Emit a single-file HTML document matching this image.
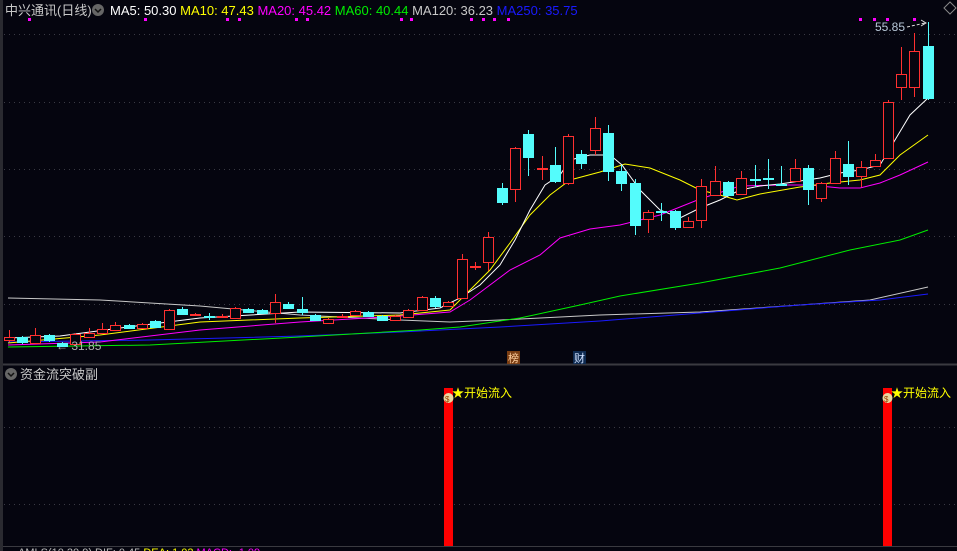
<!DOCTYPE html>
<html><head><meta charset="utf-8"><style>
html,body{margin:0;padding:0;background:#05050f;width:957px;height:551px;overflow:hidden}
svg{display:block}
text{font-family:"Liberation Sans","Noto Sans CJK SC",sans-serif}
</style></head><body>
<svg id="s" width="957" height="551" viewBox="0 0 957 551" xmlns="http://www.w3.org/2000/svg">
<rect width="957" height="551" fill="#05050f"/>
<rect x="0" y="0" width="3" height="551" fill="#2a2a30"/>
<g stroke="#3a3a44" stroke-width="1" stroke-dasharray="1,4">
<line x1="4" y1="34.5" x2="957" y2="34.5"/>
<line x1="4" y1="102.5" x2="957" y2="102.5"/>
<line x1="4" y1="169.5" x2="957" y2="169.5"/>
<line x1="4" y1="236.5" x2="957" y2="236.5"/>
<line x1="4" y1="304.5" x2="957" y2="304.5"/>
<line x1="4" y1="427.5" x2="957" y2="427.5"/>
<line x1="4" y1="504.5" x2="957" y2="504.5"/>
</g>
<line x1="3" y1="364.5" x2="957" y2="364.5" stroke="#3a3a40" stroke-width="2"/>
<line x1="3" y1="546.5" x2="957" y2="546.5" stroke="#3a3a40" stroke-width="1"/>
<text x="5" y="15" font-size="13" fill="#c8c8c8">中兴通讯(日线)</text>
<circle cx="98" cy="10" r="6" fill="#666"/><path d="M95 9 L98 12 L101 9" stroke="#111" stroke-width="1.5" fill="none"/>
<text x="110" y="15" font-size="13"><tspan fill="#ffffff">MA5: 50.30 </tspan><tspan fill="#ffff00">MA10: 47.43 </tspan><tspan fill="#ff00ff">MA20: 45.42 </tspan><tspan fill="#00ee00">MA60: 40.44 </tspan><tspan fill="#c8c8c8">MA120: 36.23 </tspan><tspan fill="#1a1aff">MA250: 35.75</tspan></text>
<path d="M944 8 L950 2 L956 8 L950 14 Z" stroke="#888" fill="none"/>
<g id="dots" fill="#ff00ff"></g>
<g id="ma" fill="none" stroke-width="1"></g>
<g id="cd"></g>
<text x="875" y="31" font-size="12" fill="#b8c8d8">55.85</text>
<path d="M907 27 L925 23" stroke="#ddd" stroke-dasharray="3,2"/><path d="M921 20 L926 23 L921 26" stroke="#ddd" fill="none"/>
<text x="56" y="350" font-size="12" fill="#b0b0b0">← 31.85</text>
<rect x="507" y="351" width="13" height="13" fill="#7a3d12"/><text x="508" y="362" font-size="11" fill="#ffd0a0">榜</text>
<rect x="573" y="351" width="13" height="13" fill="#0e2a50"/><text x="574" y="362" font-size="11" fill="#cfe0ff">财</text>
<circle cx="11" cy="374" r="6" fill="#666"/><path d="M8 373 L11 376 L14 373" stroke="#111" stroke-width="1.5" fill="none"/>
<text x="20" y="379" font-size="13" fill="#c8c8c8">资金流突破副</text>
<rect x="444" y="388" width="9" height="158" fill="#ff0000"/>
<rect x="883" y="388" width="9" height="158" fill="#ff0000"/>
<g font-size="12" fill="#ffff00"><text x="452" y="397">★开始流入</text><text x="891" y="397">★开始流入</text></g>
<g><circle cx="448.5" cy="398" r="5" fill="#e8d8a0"/><text x="445" y="402" font-size="8" fill="#a04000">$</text>
<circle cx="887.5" cy="398" r="5" fill="#e8d8a0"/><text x="884" y="402" font-size="8" fill="#a04000">$</text></g>
<text x="18" y="556" font-size="11"><tspan fill="#bbb">AMLS(10,20,9) DIF: 0.45 </tspan><tspan fill="#ffff00">DEA: 1.02 </tspan><tspan fill="#ff00ff">MACD: -1.09</tspan></text>
</svg>
<script>
var NS="http://www.w3.org/2000/svg";
function el(p,t,a){var e=document.createElementNS(NS,t);for(var k in a)e.setAttribute(k,a[k]);p.appendChild(e);return e;}
var dots=document.getElementById('dots');
[29,145,227,239,296,307,401,411,471,483,494,508,860,874,887,914].forEach(function(x){el(dots,'rect',{x:x-1,y:18,width:3,height:3});});
var ma=document.getElementById('ma');
var L=[["#c8c8c8",[[8,298],[100,300],[200,306],[300,315],[400,320],[450,322],[500,320],[600,315],[700,312],[800,305],[870,300],[928,287]]],
["#1a1aff",[[8,342],[150,340],[300,336],[400,332],[500,327],[600,321],[700,313],[800,305],[880,300],[928,294]]],
["#00ee00",[[8,347],[150,345],[300,337],[420,330],[460,327],[520,318],[580,305],[620,296],[700,283],[780,268],[850,250],[900,240],[928,230]]],
["#ff00ff",[[8,345],[100,342],[200,330],[300,322],[400,316],[450,312],[470,300],[490,285],[510,270],[540,255],[560,238],[590,229],[620,225],[660,215],[700,199],[740,186],[780,185],[810,185],[840,188],[860,188],[880,183],[900,175],[928,162]]],
["#ffff00",[[8,343],[100,335],[200,322],[300,318],[400,315],[450,310],[470,290],[490,270],[510,243],[530,215],[550,195],[570,180],[600,172],[625,164],[650,168],[680,180],[700,190],[720,195],[737,200],[760,194],[800,187],[830,183],[860,180],[880,175],[900,155],[928,135]]],
["#ffffff",[[8,338],[60,336],[120,328],[200,318],[300,312],[400,313],[440,308],[460,298],[480,285],[500,265],[515,240],[530,210],[545,185],[560,175],[570,160],[590,155],[610,155],[622,165],[640,190],[660,210],[680,218],[700,208],[720,200],[740,190],[760,186],[780,184],[800,181],[820,178],[840,173],[860,170],[880,165],[895,140],[910,115],[928,98]]]];
L.forEach(function(l){el(ma,'polyline',{points:l[1].map(function(p){return p.join(',')}).join(' '),stroke:l[0]});});
// [top,bottom,high,low,up]
var C=[[337,340,330,342,1],[337,342,336,344,0],[335,343,328,344,1],[335,340,334,342,0],[343,346,342,347,0],[334,344,333,345,1],[333,337,328,338,1],[329,333,323,334,1],[325,330,322,331,1],[325,328,324,329,0],[324,328,323,329,1],[321,327,320,328,0],[310,329,309,330,1],[309,314,307,315,0],[314,315,313,315,1],[316,317,313,320,0],[316,317,314,318,1],[308,318,307,319,1],[309,312,308,313,0],[310,313,309,314,0],[302,313,294,323,1],[304,308,302,309,0],[309,312,297,315,0],[315,320,314,321,0],[319,323,318,324,1],[316,317,314,318,1],[311,315,310,316,1],[312,316,311,317,0],[316,320,315,321,0],[316,320,315,321,1],[310,317,309,318,1],[297,310,296,311,1],[298,306,296,308,0],[302,306,301,307,1],[259,298,254,299,1],[266,267,262,270,1],[237,262,232,271,1],[188,202,183,205,0],[148,189,147,202,1],[134,157,130,176,0],[168,169,156,180,1],[165,181,147,183,0],[136,183,134,185,1],[154,163,150,169,0],[128,150,117,155,1],[133,171,125,181,0],[171,183,165,191,0],[183,225,179,235,0],[212,219,210,233,1],[211,212,203,221,0],[211,227,210,230,0],[221,227,217,228,1],[186,220,179,228,1],[181,195,166,196,1],[182,195,181,196,0],[178,194,171,195,1],[179,180,165,187,0],[178,179,159,189,0],[184,185,166,186,0],[168,181,159,182,1],[168,189,165,205,0],[183,198,182,202,1],[158,183,151,184,1],[164,176,141,185,0],[167,176,161,187,1],[160,166,154,167,1],[102,158,100,159,1],[74,87,47,100,1],[51,87,33,97,1],[46,98,22,100,0]];
var cd=document.getElementById('cd');
C.forEach(function(c,i){var x=Math.round(8.7+13.32*i);var col=c[4]?'#ff3030':'#54fcfc';
el(cd,'line',{x1:x+.5,y1:c[2],x2:x+.5,y2:c[3],stroke:col});
var h=Math.max(1,c[1]-c[0]);
if(c[4]){el(cd,'rect',{x:x-4.5,y:c[0]+.5,width:10,height:h,fill:'#05050f',stroke:col});}
else el(cd,'rect',{x:x-5,y:c[0],width:11,height:h+1,fill:col});});
</script>
</body></html>
